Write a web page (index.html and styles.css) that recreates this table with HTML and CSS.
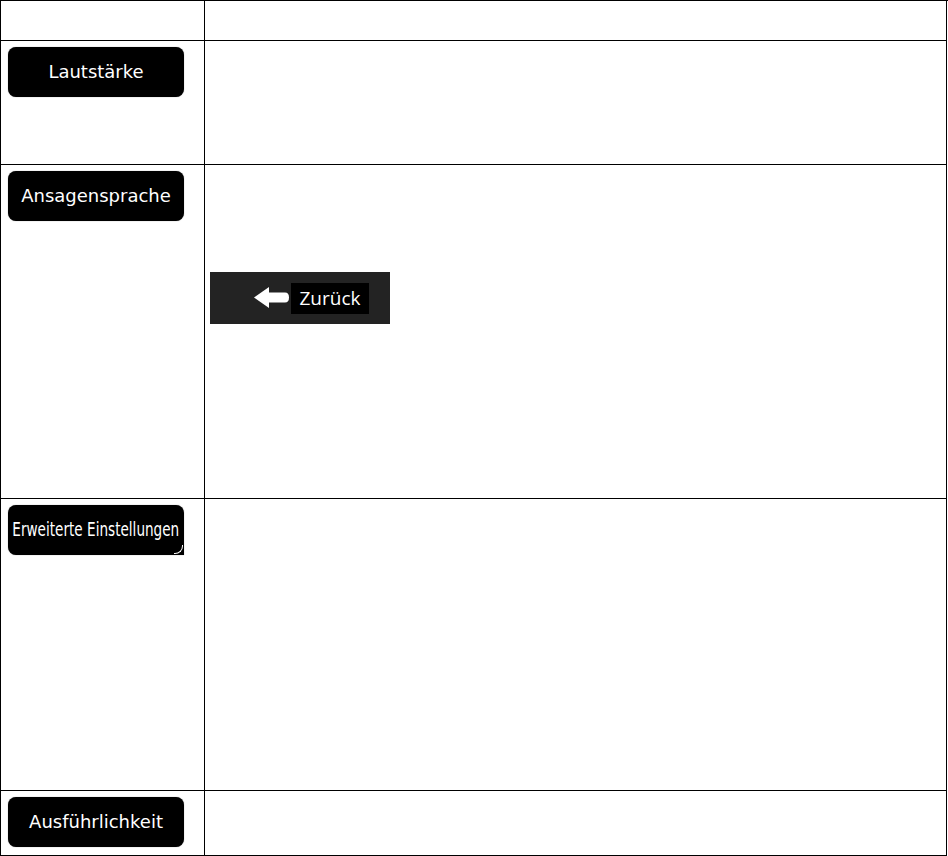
FILE: index.html
```html
<!DOCTYPE html>
<html lang="de">
<head>
    <meta charset="UTF-8">
    <meta name="viewport" content="width=device-width, initial-scale=1.0">
    <title>Ton und Warnungen</title>
    <link rel="stylesheet" href="styles.css">
</head>
<body>
    <div class="table">
        <div class="cell"></div>
        <div class="cell"></div>

        <div class="cell"><div class="btn">Lautstärke</div></div>
        <div class="cell"></div>

        <div class="cell"><div class="btn">Ansagensprache</div></div>
        <div class="cell desc">
            <div class="back-shot">
                <svg class="back-arrow" width="36" height="22" viewBox="0 0 36 22">
                    <path d="M0 10.5 L15 0 L15 5.5 L31 5.5 Q35 5.5 35 10.5 Q35 15.5 31 15.5 L15 15.5 L15 21 Z" fill="#fff"/>
                </svg>
                <span class="back-label">Zurück</span>
            </div>
        </div>

        <div class="cell"><div class="btn btn-notch"><span class="narrow">Erweiterte Einstellungen</span></div></div>
        <div class="cell"></div>

        <div class="cell"><div class="btn">Ausführlichkeit</div></div>
        <div class="cell"></div>
    </div>
</body>
</html>
```
FILE: styles.css
```css
body {
    margin: 0;
    background: #fff;
    font-family: "DejaVu Sans", Verdana, sans-serif;
}
.table {
    display: grid;
    grid-template-columns: 204px 742px;
    grid-template-rows: 40px 124px 334px 292px 65px;
    width: 947px;
    border-left: 1px solid #000;
    border-top: 1px solid #000;
}
.cell {
    box-sizing: border-box;
    border-right: 1px solid #000;
    border-bottom: 1px solid #000;
    padding: 6px 7px;
}
.btn {
    position: relative;
    width: 176px;
    height: 50px;
    background: #000;
    color: #fff;
    border-radius: 8px;
    box-shadow: 0 0 1px #777;
    display: flex;
    align-items: center;
    justify-content: center;
    font-size: 18px;
    padding-bottom: 2px;
    box-sizing: border-box;
    white-space: nowrap;
}
.narrow {
    display: inline-block;
    font-size: 20px;
    transform: scaleX(0.68);
}
.btn-notch {
    border-bottom-right-radius: 0;
}
.btn-notch::after {
    content: "";
    position: absolute;
    right: 1px;
    bottom: 1px;
    width: 8px;
    height: 8px;
    border-right: 1px solid #fff;
    border-bottom: 1px solid #fff;
    border-bottom-right-radius: 8px;
}
.desc {
    padding: 0 5px;
}
.back-shot {
    margin-top: 107px;
    width: 180px;
    height: 52px;
    background: #232323;
    display: flex;
    align-items: center;
}
.back-arrow {
    margin-left: 44px;
}
.back-label {
    margin-left: 1px;
    background: #000;
    color: #fff;
    font-family: "Open Sans", sans-serif;
    font-size: 19px;
    width: 78px;
    height: 31px;
    line-height: 31px;
    text-align: center;
}
```
